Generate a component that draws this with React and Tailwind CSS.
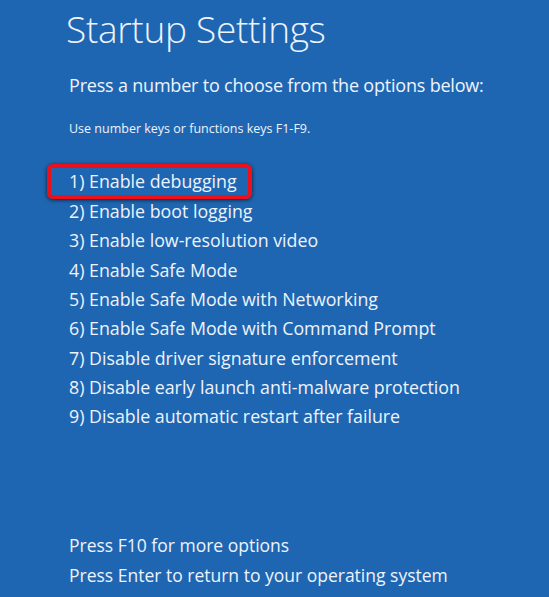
import React from "react";

const items = [
  "1) Enable debugging",
  "2) Enable boot logging",
  "3) Enable low-resolution video",
  "4) Enable Safe Mode",
  "5) Enable Safe Mode with Networking",
  "6) Enable Safe Mode with Command Prompt",
  "7) Disable driver signature enforcement",
  "8) Disable early launch anti-malware protection",
  "9) Disable automatic restart after failure",
];

export default function App() {
  return (
    <div
      className="w-[549px] h-[597px] overflow-hidden bg-[#1f66b2] text-[#eef3fb] flex flex-col"
      style={{ fontFamily: '"Open Sans", "Noto Sans", sans-serif' }}
    >
      <h1 className="ml-[66px] mt-[3px] text-[37px] leading-[52px] font-light tracking-[-0.3px]">
        Startup Settings
      </h1>
      <p className="ml-[69px] mt-[18px] text-[18px] leading-[24px] font-normal tracking-[-0.2px]">
        Press a number to choose from the options below:
      </p>
      <p className="ml-[69px] mt-[24px] text-[12.5px] leading-[16px]">
        Use number keys or functions keys F1-F9.
      </p>
      <ul className="mt-[30px] flex flex-col">
        {items.map((t, i) => (
          <li key={i} className="h-[29.4px] flex items-center">
            {i === 0 ? (
              <span className="ml-[47px] pl-[18px] h-[35px] w-[205px] flex items-center border-[4px] border-[#ec101a] rounded-[6px] shadow-[0_1px_4px_rgba(0,0,0,0.7)] text-[17.8px]">
                {t}
              </span>
            ) : (
              <span className="ml-[69px] text-[17.8px]">{t}</span>
            )}
          </li>
        ))}
      </ul>
      <div className="mt-auto mb-[7px] ml-[69px] flex flex-col text-[17.5px]">
        <span className="h-[30px] flex items-center">Press F10 for more options</span>
        <span className="h-[30px] flex items-center">Press Enter to return to your operating system</span>
      </div>
    </div>
  );
}
